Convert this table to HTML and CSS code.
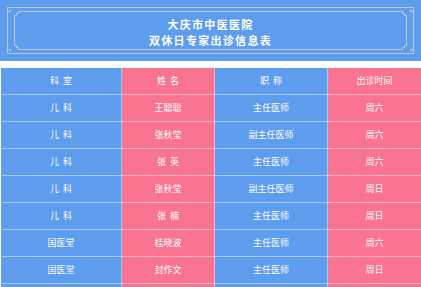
FILE: index.html
```html
<!DOCTYPE html>
<html lang="zh">
<head>
<meta charset="utf-8">
<title>大庆市中医医院 双休日专家出诊信息表</title>
<link rel="stylesheet" href="styles.css">
</head>
<body>
<header class="banner">
  <svg class="frame" viewBox="0 0 421 61" width="421" height="61" aria-hidden="true">
    <g fill="none" stroke="#dcd8c2" stroke-opacity="0.75" stroke-width="1">
      <path d="M11.5 7.5 H409.5 M11.5 53.5 H409.5 M7.5 11.5 V49.5 M413.5 11.5 V49.5"/>
      <path d="M11.5 7.5 H7.5 V11.5 H10.5 V9.5"/>
      <path d="M409.5 7.5 H413.5 V11.5 H410.5 V9.5"/>
      <path d="M11.5 53.5 H7.5 V49.5 H10.5 V51.5"/>
      <path d="M409.5 53.5 H413.5 V49.5 H410.5 V51.5"/>
      <path d="M18.5 11.5 H402.5 V13.5 H404.5 V15.5 H406.5 V45.5 H404.5 V47.5 H402.5 V49.5 H18.5 V47.5 H16.5 V45.5 H14.5 V15.5 H16.5 V13.5 H18.5 Z"/>
    </g>
  </svg>
  <h1 class="title">
    <span class="title-line">大庆市中医医院</span>
    <span class="title-line">双休日专家出诊信息表</span>
  </h1>
</header>

<table class="schedule">
  <colgroup>
    <col class="w-dept">
    <col class="w-name">
    <col class="w-rank">
    <col class="w-day">
  </colgroup>
  <thead>
    <tr>
      <th class="blue">科  室</th>
      <th class="pink">姓  名</th>
      <th class="blue">职  称</th>
      <th class="pink">出诊时间</th>
    </tr>
  </thead>
  <tbody>
    <tr><td class="blue">儿  科</td><td class="pink">王聪聪</td><td class="blue">主任医师</td><td class="pink">周六</td></tr>
    <tr><td class="blue">儿  科</td><td class="pink">张秋莹</td><td class="blue">副主任医师</td><td class="pink">周六</td></tr>
    <tr><td class="blue">儿  科</td><td class="pink">张  英</td><td class="blue">主任医师</td><td class="pink">周六</td></tr>
    <tr><td class="blue">儿  科</td><td class="pink">张秋莹</td><td class="blue">副主任医师</td><td class="pink">周日</td></tr>
    <tr><td class="blue">儿  科</td><td class="pink">张  楠</td><td class="blue">主任医师</td><td class="pink">周日</td></tr>
    <tr><td class="blue">国医堂</td><td class="pink">桂晓波</td><td class="blue">主任医师</td><td class="pink">周六</td></tr>
    <tr><td class="blue">国医堂</td><td class="pink">封作文</td><td class="blue">主任医师</td><td class="pink">周日</td></tr>
    <tr><td class="blue"></td><td class="pink"></td><td class="blue"></td><td class="pink"></td></tr>
  </tbody>
</table>
</body>
</html>
```

FILE: styles.css
```css
html, body {
  margin: 0;
  padding: 0;
  background: #ffffff;
  font-family: "Noto Sans CJK SC", "Noto Sans", "Liberation Sans", sans-serif;
}

.banner {
  position: relative;
  height: 61px;
  margin-bottom: 6px;
  background: #5e9cee;
  display: flex;
  align-items: center;
  justify-content: center;
}

.frame {
  position: absolute;
  left: 0;
  top: 0;
  width: 100%;
  height: 100%;
}

.title {
  margin: 0;
  padding-top: 2px;
  display: flex;
  flex-direction: column;
  align-items: center;
  color: #ffffff;
  font-size: 11px;
  font-weight: 700;
  line-height: 16px;
  letter-spacing: 1.3px;
}

.schedule {
  width: 100%;
  border-collapse: collapse;
  table-layout: fixed;
  color: #ffffff;
  font-size: 9px;
}

.w-dept { width: 121px; }
.w-name { width: 93px; }
.w-rank { width: 113px; }
.w-day  { width: 94px; }

.schedule th,
.schedule td {
  height: 26px;
  padding: 0;
  text-align: center;
  vertical-align: middle;
  font-weight: 400;
  border: 1px solid rgba(255, 255, 255, 0.45);
  line-height: 12px;
  white-space: pre;
}

.blue { background: #5e9cee; }
.pink { background: #f97491; }
```
